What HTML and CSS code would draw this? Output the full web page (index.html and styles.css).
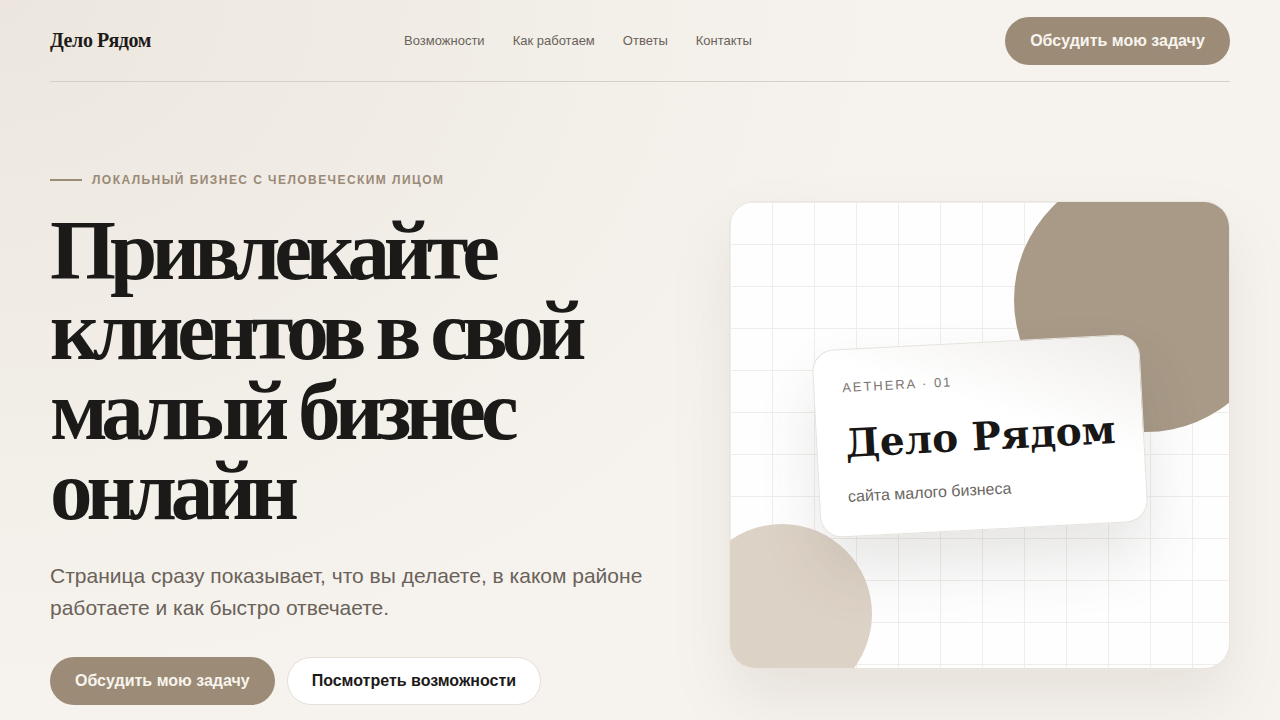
FILE: index.html
```html
<!DOCTYPE html>
<html lang="ru">
<head>
<meta charset="utf-8">
<title>Дело Рядом</title>
<link rel="stylesheet" href="styles.css">
</head>
<body>
<div class="page">
  <header class="header">
    <div class="logo">Дело Рядом</div>
    <nav class="nav">
      <a href="#">Возможности</a>
      <a href="#">Как работаем</a>
      <a href="#">Ответы</a>
      <a href="#">Контакты</a>
    </nav>
    <a class="btn btn-primary btn-header" href="#">Обсудить мою задачу</a>
  </header>
  <main class="hero">
    <section class="hero-text">
      <div class="eyebrow"><span class="eyebrow-line"></span>ЛОКАЛЬНЫЙ БИЗНЕС С ЧЕЛОВЕЧЕСКИМ ЛИЦОМ</div>
      <h1 class="title">Привлекайте клиентов в свой малый бизнес онлайн</h1>
      <p class="lead">Страница сразу показывает, что вы делаете, в каком районе работаете и как быстро отвечаете.</p>
      <div class="actions">
        <a class="btn btn-primary" href="#">Обсудить мою задачу</a>
        <a class="btn btn-ghost" href="#">Посмотреть возможности</a>
      </div>
    </section>
    <section class="visual">
      <div class="blob blob-a"></div>
      <div class="blob blob-b"></div>
      <div class="card">
        <div class="card-kicker">AETHERA · 01</div>
        <div class="card-title">Дело Рядом</div>
        <div class="card-sub">сайта малого бизнеса</div>
      </div>
    </section>
  </main>
</div>
</body>
</html>
```

FILE: styles.css
```css
* { box-sizing: border-box; }
html, body { margin: 0; padding: 0; }
body {
  width: 1280px;
  height: 720px;
  overflow: hidden;
  font-family: "Liberation Sans", Arial, sans-serif;
  background: radial-gradient(ellipse 900px 700px at 0% 0%, #ece6de 0%, #f1ede6 50%, #f6f3ee 100%);
  color: #1c1a18;
}
a { text-decoration: none; color: inherit; }
.page { padding: 0 50px; }

.header {
  height: 82px;
  display: flex;
  align-items: center;
  justify-content: space-between;
  border-bottom: 1px solid #d6d0c8;
}
.logo {
  font-family: "Liberation Serif", "Times New Roman", serif;
  font-weight: 700;
  font-size: 20px;
  letter-spacing: -0.02em;
  color: #1d1b19;
  width: 225px;
}
.nav {
  display: flex;
  gap: 28px;
  font-size: 13px;
  color: #6a625a;
  margin-left: -124px;
}
.btn {
  display: inline-flex;
  align-items: center;
  justify-content: center;
  height: 48px;
  border-radius: 24px;
  font-weight: 700;
  font-size: 16px;
}
.btn-primary {
  background: #9c8c77;
  color: #f8f4ee;
  padding: 0 25px;
}
.btn-header { width: 225px; }
.btn-ghost {
  background: #ffffff;
  border: 1px solid #e4dfd8;
  color: #1c1a18;
  padding: 0 24px;
}

.hero {
  display: flex;
  justify-content: space-between;
}
.hero-text { width: 640px; padding-top: 91px; }
.eyebrow {
  display: flex;
  align-items: center;
  font-size: 12px;
  font-weight: 700;
  letter-spacing: 0.12em;
  color: #9a8a77;
}
.eyebrow-line {
  width: 32px;
  height: 2px;
  background: #9c8c77;
  margin-right: 10px;
}
.title {
  font-family: "Liberation Serif", "Times New Roman", serif;
  font-weight: 700;
  font-size: 85px;
  line-height: 80px;
  letter-spacing: -0.072em;
  margin: 23px 0 0;
  color: #1b1a19;
}
.lead {
  font-size: 21px;
  line-height: 31.5px;
  color: #6a625a;
  margin: 30px 0 0;
  width: 640px;
}
.actions {
  display: flex;
  gap: 12px;
  margin-top: 34px;
}

.visual {
  position: relative;
  width: 501px;
  height: 468px;
  margin-top: 119px;
  border-radius: 26px;
  overflow: hidden;
  background-color: #fefefe;
  background-image:
    linear-gradient(to right, #efedea 1px, transparent 1px),
    linear-gradient(to bottom, #efedea 1px, transparent 1px);
  background-size: 42px 42px;
  background-position: 0 0;
  border: 1px solid #e9e5df;
  box-shadow: 0 30px 60px rgba(120, 100, 80, 0.12);
}
.blob { position: absolute; border-radius: 50%; }
.blob-a {
  width: 264px; height: 264px;
  left: 284px; top: -34px;
  background: #a89a87;
}
.blob-b {
  width: 180px; height: 180px;
  left: -38px; top: 322px;
  background: #ddd2c6;
}
.card {
  position: absolute;
  left: 86px;
  top: 140px;
  width: 328px;
  height: 188px;
  border-radius: 22px;
  background: linear-gradient(200deg, #efedea 0%, #ffffff 40%, #ffffff 100%);
  border: 1px solid #e6e2dd;
  box-shadow: 0 34px 60px rgba(80, 70, 60, 0.13);
  transform: rotate(-3deg);
  padding: 30px 28px 0 28px;
}
.card-kicker {
  font-size: 13px;
  letter-spacing: 0.15em;
  color: #7a7672;
}
.card-title {
  font-family: "DejaVu Serif", Georgia, serif;
  font-weight: 700;
  font-size: 39px;
  white-space: nowrap;
  color: #181716;
  margin-top: 25px;
}
.card-sub {
  font-size: 16px;
  color: #6a6661;
  margin-top: 22px;
}
```
